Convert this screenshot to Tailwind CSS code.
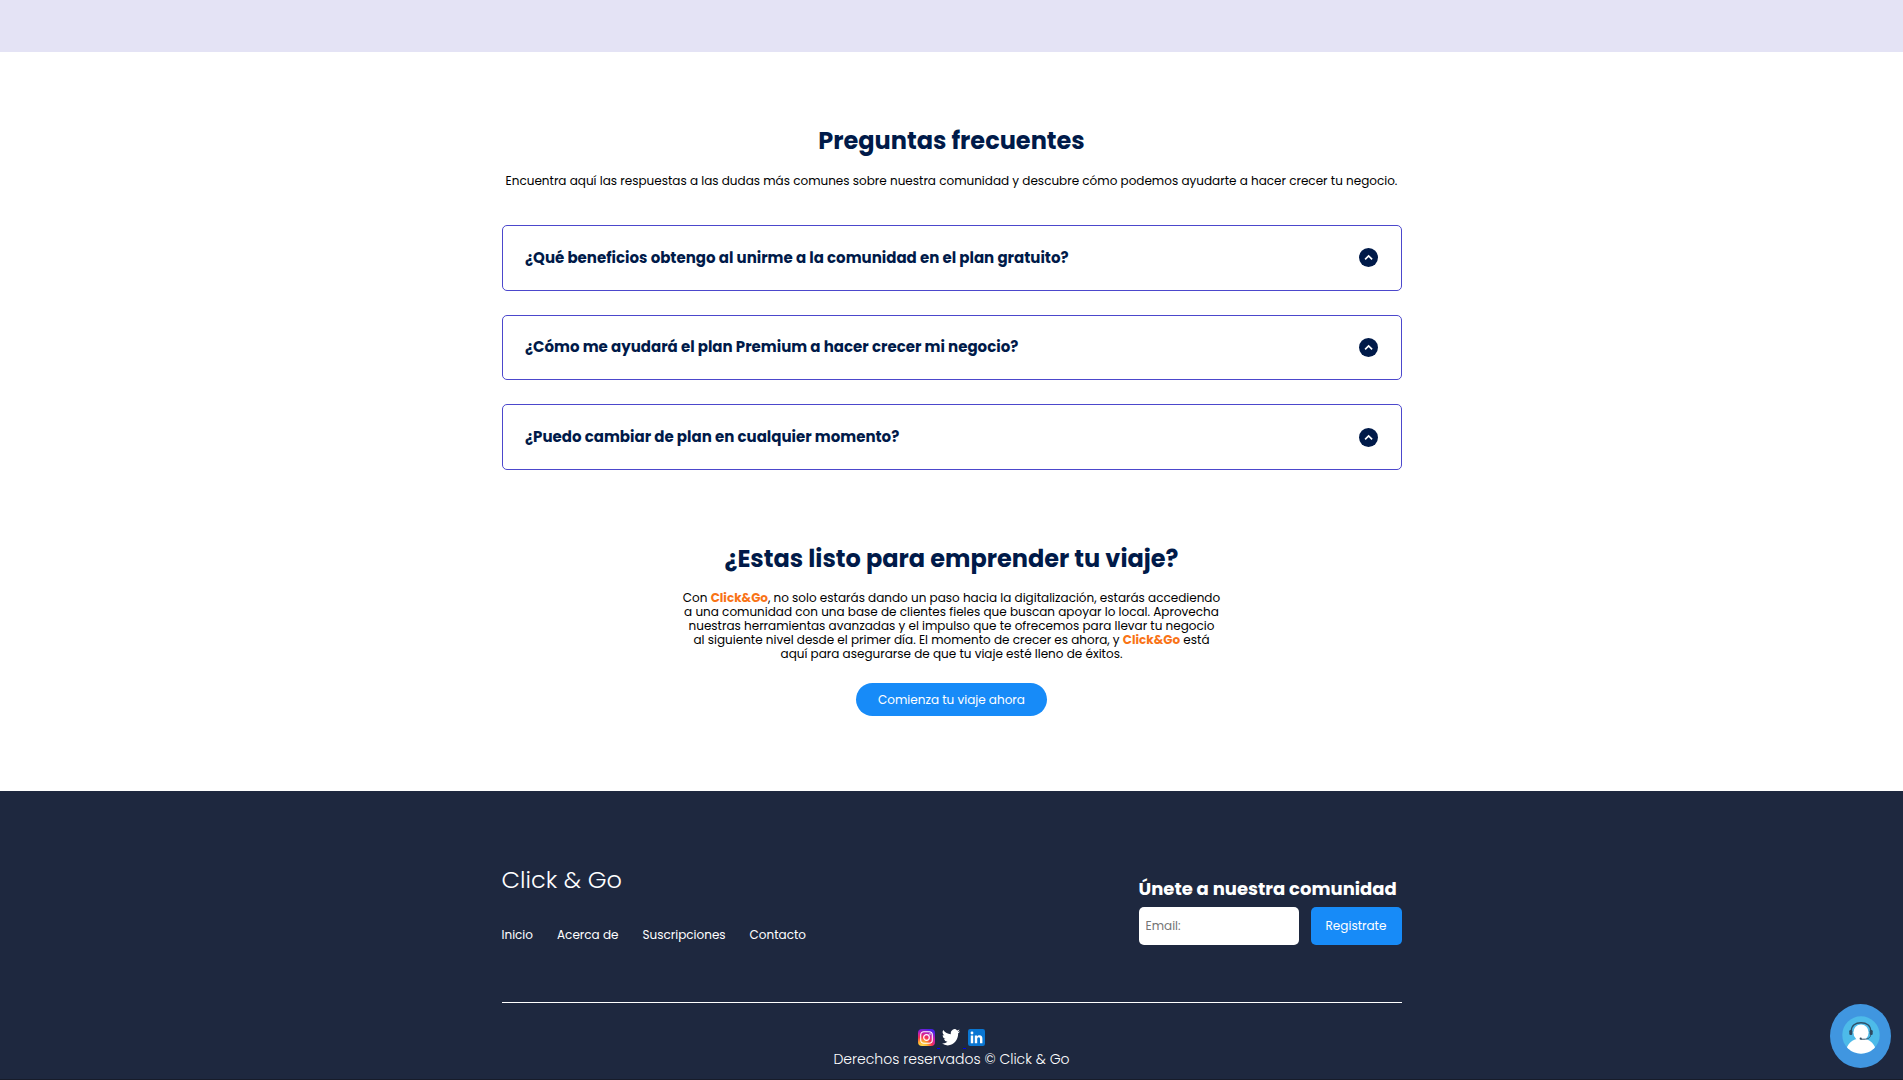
<!DOCTYPE html>
<html lang="es">
<head>
<meta charset="utf-8">
<title>Click &amp; Go</title>
<script src="https://cdn.jsdelivr.net/npm/@tailwindcss/browser@4"></script>
</head>
<body class="h-[1080px] overflow-hidden bg-white font-['Poppins','Inter',sans-serif] text-xs text-black">
<div class="h-[52px] bg-[#e4e3f5]"></div>

<main class="mx-auto flex h-[739px] w-[900px] flex-col items-center pt-[71px]">
  <h2 class="h-9 text-2xl leading-9 font-bold whitespace-nowrap text-[#001a49]">Preguntas frecuentes</h2>
  <p class="mt-[15px] leading-[14px] whitespace-nowrap">Encuentra aquí las respuestas a las dudas más comunes sobre nuestra comunidad y descubre cómo podemos ayudarte a hacer crecer tu negocio.</p>

  <div class="mt-[37px] flex w-full flex-col gap-6 text-[15px] font-bold text-[#001a49]">
    <div class="flex h-[65.6px] items-center justify-between rounded-[5px] border border-[#4c48cc] px-[22.5px] pt-[0.2px]">
      <span>¿Qué beneficios obtengo al unirme a la comunidad en el plan gratuito?</span>
      <svg class="size-[19px]" viewBox="0 0 19 19"><circle cx="9.5" cy="9.5" r="9.5" fill="#001a49"/><path d="M6.1 11.3 9.6 7.9l3.5 3.4" fill="none" stroke="#fff" stroke-width="1.7"/></svg>
    </div>
    <div class="flex h-[65.6px] items-center justify-between rounded-[5px] border border-[#4c48cc] px-[22.5px] pt-[0.2px]">
      <span>¿Cómo me ayudará el plan Premium a hacer crecer mi negocio?</span>
      <svg class="size-[19px]" viewBox="0 0 19 19"><circle cx="9.5" cy="9.5" r="9.5" fill="#001a49"/><path d="M6.1 11.3 9.6 7.9l3.5 3.4" fill="none" stroke="#fff" stroke-width="1.7"/></svg>
    </div>
    <div class="flex h-[65.6px] items-center justify-between rounded-[5px] border border-[#4c48cc] px-[22.5px] pt-[0.2px]">
      <span>¿Puedo cambiar de plan en cualquier momento?</span>
      <svg class="size-[19px]" viewBox="0 0 19 19"><circle cx="9.5" cy="9.5" r="9.5" fill="#001a49"/><path d="M6.1 11.3 9.6 7.9l3.5 3.4" fill="none" stroke="#fff" stroke-width="1.7"/></svg>
    </div>
  </div>

  <h2 class="mt-[71px] h-9 text-2xl leading-9 font-bold whitespace-nowrap text-[#001a49]">¿Estas listo para emprender tu viaje?</h2>
  <p class="mt-[14px] text-center leading-[14.08px] whitespace-nowrap">Con <b class="font-bold text-[#f97316]">Click&amp;Go</b>, no solo estarás dando un paso hacia la digitalización, estarás accediendo<br>a una comunidad con una base de clientes fieles que buscan apoyar lo local. Aprovecha<br>nuestras herramientas avanzadas y el impulso que te ofrecemos para llevar tu negocio<br>al siguiente nivel desde el primer día. El momento de crecer es ahora, y <b class="font-bold text-[#f97316]">Click&amp;Go</b> está<br>aquí para asegurarse de que tu viaje esté lleno de éxitos.</p>
  <button class="mt-[22px] h-[33px] w-[191px] rounded-full bg-[#178bf8] text-white">Comienza tu viaje ahora</button>
</main>

<footer class="h-[288px] bg-[#1e283f] pt-[70px] text-white">
  <div class="mx-auto flex h-[142px] w-[900px] items-start justify-between border-b border-white">
    <div>
      <div class="h-[38px] text-2xl leading-[38px] font-light">Click &amp; Go</div>
      <nav class="mt-[26px] flex gap-6 leading-5">
        <a>Inicio</a><a>Acerca de</a><a>Suscripciones</a><a>Contacto</a>
      </nav>
    </div>
    <div class="pt-[13px]">
      <h3 class="text-lg leading-[30px] font-bold whitespace-nowrap">Únete a nuestra comunidad</h3>
      <div class="mt-[3px] flex gap-3">
        <input class="h-[38px] w-[160px] rounded-[5px] bg-white px-[7px] placeholder:text-[#757575]" placeholder="Email:">
        <button class="h-[38px] w-[91px] rounded-[5px] bg-[#178bf8]">Registrate</button>
      </div>
    </div>
  </div>
  <div class="mt-[25px] flex h-[21px] items-start justify-center">
    <svg class="mt-px h-[17px] w-[17px]" viewBox="0 0 17 17">
      <defs>
        <radialGradient id="ig" cx="0.25" cy="1.05" r="1.1"><stop offset="0" stop-color="#ffe45c"/><stop offset=".28" stop-color="#ffb52e"/><stop offset=".52" stop-color="#f8324f"/><stop offset=".75" stop-color="#c81fae"/><stop offset="1" stop-color="#4a20e8"/></radialGradient>
      </defs>
      <rect width="17" height="17" rx="4" fill="url(#ig)"/>
      <rect x="2.7" y="2.7" width="11.6" height="11.6" rx="3.2" fill="none" stroke="#fff" stroke-width="1.1"/>
      <circle cx="8.5" cy="8.5" r="2.8" fill="none" stroke="#fff" stroke-width="1.2"/><circle cx="12" cy="5" r=".75" fill="#fff"/>
    </svg>
    <span class="mx-[2.3px] h-[21px] w-[3px] border-b border-[#0000ee]"></span>
    <svg class="mt-px h-[17px] w-[18px]" viewBox="0 2 24 20.5" preserveAspectRatio="none"><path fill="#fff" d="M23.95 4.57a10 10 0 0 1-2.82.77 4.96 4.96 0 0 0 2.16-2.72c-.95.55-2 .96-3.13 1.18a4.92 4.92 0 0 0-8.38 4.48C7.69 8.1 4.07 6.13 1.64 3.16a4.92 4.92 0 0 0 1.52 6.57 4.9 4.9 0 0 1-2.23-.61v.06a4.92 4.92 0 0 0 3.95 4.83 5 5 0 0 1-2.21.08 4.94 4.94 0 0 0 4.6 3.42A9.87 9.87 0 0 1 0 19.54a13.99 13.99 0 0 0 7.55 2.21c9.05 0 14-7.5 14-13.98 0-.21 0-.42-.02-.63a9.94 9.94 0 0 0 2.46-2.55z"/></svg>
    <span class="mr-[2.3px] ml-[2.5px] h-[21px] w-[3px] border-b border-[#0000ee]"></span>
    <svg class="mt-px h-[17px] w-[17px]" viewBox="0 0 17 17">
      <rect width="17" height="17" rx="2.2" fill="#0a76d2"/>
      <circle cx="4" cy="4" r="1.4" fill="#fff"/><path fill="#fff" d="M2.8 6.4h2.4v7.9H2.8zM6.8 6.4h2.3v1.1c.5-.8 1.3-1.3 2.4-1.3 2.2 0 2.9 1.4 2.9 3.5v4.6H12v-4.1c0-1.1-.2-2-1.3-2s-1.5.9-1.5 2v4.1H6.800z"/>
    </svg>
  </div>
  <p class="text-center text-sm leading-5 font-light">Derechos reservados © Click &amp; Go</p>
</footer>
<div class="h-px bg-[#171c2a]"></div>

<button class="fixed right-[12px] bottom-[12px] flex h-[64px] w-[61px] items-center justify-center rounded-[50%] bg-[#4096e0] pb-[3px]" aria-label="Chat">
  <svg class="size-[38px]" viewBox="0 0 38 38">
    <defs><clipPath id="disc"><circle cx="19" cy="19" r="18.7"/></clipPath></defs>
    <circle cx="19" cy="19" r="18.7" fill="#4dbbe9"/>
    <path clip-path="url(#disc)" fill="#fff" d="M3 38C4.500 28 10 22.500 19 22.500S33.500 28 35 38z"/>
    <ellipse cx="19" cy="16.5" rx="7.6" ry="8" fill="#fff"/>
    <path d="M9.300 15C9.300 9.500 13.500 6.700 19 6.700S28.700 9.500 28.700 15" fill="none" stroke="#2f5068" stroke-width="1.4"/>
    <rect x="7.3" y="14" width="3" height="5" rx="1.2" fill="#2f4a60"/><rect x="27.7" y="14" width="3" height="5" rx="1.2" fill="#2f4a60"/>
    <path d="M28.700 18.500c0 3.500-3 4.700-6.700 4.700h-3" fill="none" stroke="#2f5068" stroke-width="1"/><circle cx="18.7" cy="22.7" r="1.1" fill="#2f4a60"/>
  </svg>
</button>
</body>
</html>
